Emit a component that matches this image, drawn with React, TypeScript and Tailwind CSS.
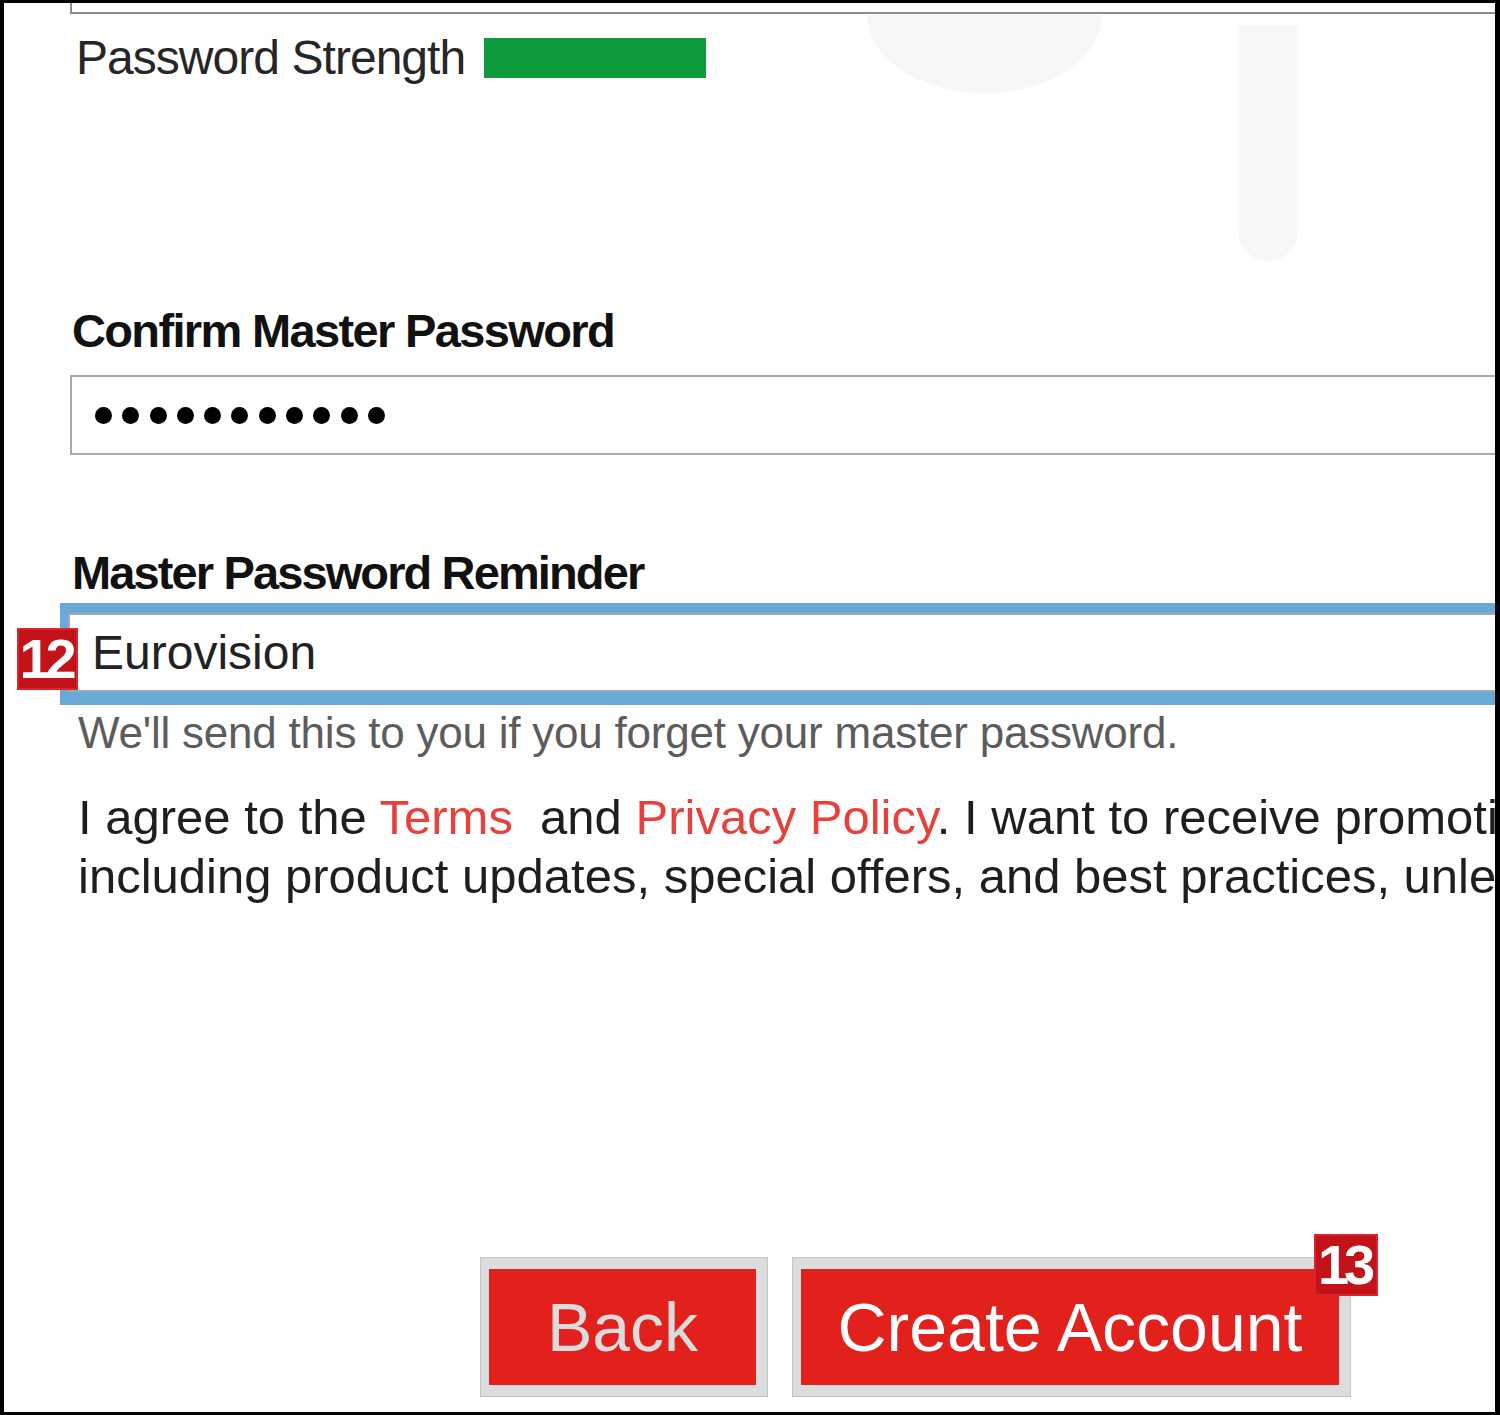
import React from "react";

/**
 * Tail end of a sign-up form: strength meter, confirm + reminder fields,
 * consent copy and the Back / Create Account pair. Numbered callouts sit
 * over the reminder field and the submit button.
 */
function Callout({ n, className }: { n: string; className: string }) {
  return (
    <div
      className={`absolute flex items-center justify-center border-2 border-[#d9262c] bg-[#c3121a] font-['Liberation_Sans',Arial,sans-serif] text-[56px] font-bold leading-none tracking-[-0.09em] text-white ${className}`}
    >
      <span className="-ml-[4px]">{n}</span>
    </div>
  );
}

function FormButton({ label, muted, children }: { label: string; muted?: boolean; children?: React.ReactNode }) {
  return (
    <div className="relative border border-[#c4c4c4] bg-[#dcdcdc] pb-[11px] pl-[8px] pr-[11px] pt-[11px]">
      <button
        type="button"
        className={`flex h-[116px] items-center justify-center bg-[#e2211c] font-['Liberation_Sans',Arial,sans-serif] text-[68px] leading-none ${
          muted ? "w-[267px] text-[#dcdcdc]" : "w-[538px] text-white"
        }`}
      >
        {label}
      </button>
      {children}
    </div>
  );
}

export default function App() {
  const dots = Array.from({ length: 11 });
  return (
    <div className="relative h-[1415px] w-[1500px] overflow-hidden border-b-[3px] border-l-4 border-r-[5px] border-t-[3px] border-black bg-white font-['Liberation_Sans',Arial,sans-serif]">
      {/* faint watermark behind the form */}
      <div className="absolute left-[863px] top-[12px] h-[78px] w-[235px] rounded-bl-[50%_100%] rounded-br-[50%_100%] bg-[#f7f7f7]" />
      <div className="absolute left-[1234px] top-[22px] h-[236px] w-[60px] rounded-b-full bg-[#f7f7f7]" />

      <div className="relative flex flex-col pl-[66px]">
        {/* bottom edge of the master password field above */}
        <div className="h-[11px] w-[1500px] shrink-0 border-b-2 border-l-2 border-[#8c8c8c]" />

        <div className="mt-[20px] flex h-[48px] items-center gap-[19px] pl-[6px]">
          <span className="text-[48px] leading-none tracking-[-0.02em] text-[#262626]">Password Strength</span>
          <div className="h-[40px] w-[222px] bg-[#0f9b3b]" />
        </div>

        <label className="mt-[225px] pl-[2px] text-[47px] font-bold leading-none tracking-[-0.035em] text-[#111]">
          Confirm Master Password
        </label>
        <div className="mt-[21px] flex h-[80px] w-[1500px] shrink-0 items-center gap-[10.3px] border-2 border-[#ababab] pl-[23px]">
          {dots.map((_, i) => (
            <div key={i} className="h-[17px] w-[17px] rounded-full bg-black" />
          ))}
        </div>

        <label className="mt-[94px] pl-[2px] text-[47px] font-bold leading-none tracking-[-0.04em] text-[#111]">
          Master Password Reminder
        </label>
        <div className="relative -ml-[10px] mt-[7px] w-[1520px] shrink-0 bg-[#6aa8d8] pb-[13px] pl-[8px] pt-[10px]">
          <div className="flex h-[79px] items-center border-2 border-[#9fa9b3] bg-white pl-[22px] text-[48px] leading-none text-[#222]">
            Eurovision
          </div>
          <Callout n="12" className="-left-[43px] top-[25px] h-[62px] w-[61px]" />
        </div>

        <p className="mt-[6px] pl-[8px] text-[44px] leading-none tracking-[-0.005em] text-[#5c5c5c]">
          We'll send this to you if you forget your master password.
        </p>

        <div className="mt-[33px] whitespace-nowrap pl-[8px] text-[49px] leading-[59px] text-[#1e1e1e]">
          <div>
            I agree to the <a className="text-[#e8403b]">Terms</a>
            {"\u00a0 and "}
            <a className="text-[#e8403b]">Privacy Policy</a>. I want to receive promotional emails from LastPass,
          </div>
          <div>including product updates, special offers, and best practices, unless I opt out.</div>
        </div>

        <div className="ml-[410px] mt-[351px] flex gap-[24px]">
          <FormButton label="Back" muted />
          <FormButton label="Create Account">
            <Callout n="13" className="left-[521px] -top-[24px] h-[62px] w-[64px]" />
          </FormButton>
        </div>
      </div>
    </div>
  );
}
